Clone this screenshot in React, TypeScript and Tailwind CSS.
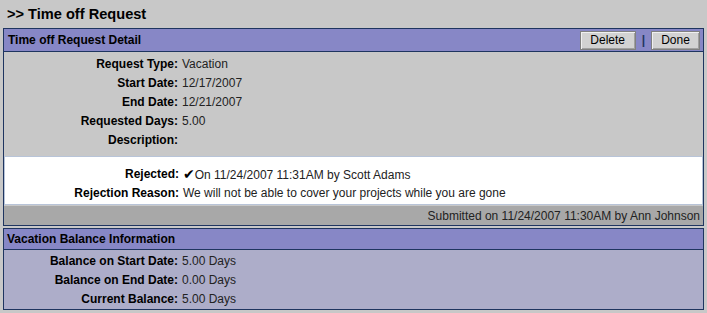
import type { ReactNode } from "react";

type Row = { label: string; value: ReactNode };

const detailRows: Row[] = [
  { label: "Request Type:", value: "Vacation" },
  { label: "Start Date:", value: "12/17/2007" },
  { label: "End Date:", value: "12/21/2007" },
  { label: "Requested Days:", value: "5.00" },
  { label: "Description:", value: "" },
];

const rejectionRows: Row[] = [
  {
    label: "Rejected:",
    value: (
      <>
        <span className="font-['DejaVu_Sans',sans-serif] text-[14px] leading-[19px] text-black">✔</span>
        On 11/24/2007 11:31AM by Scott Adams
      </>
    ),
  },
  {
    label: "Rejection Reason:",
    value: "We will not be able to cover your projects while you are gone",
  },
];

const balanceRows: Row[] = [
  { label: "Balance on Start Date:", value: "5.00 Days" },
  { label: "Balance on End Date:", value: "0.00 Days" },
  { label: "Current Balance:", value: "5.00 Days" },
];

function FieldRow({ label, value }: Row) {
  return (
    <div className="flex h-[19px] items-center leading-[19px]">
      <div className="w-[174px] shrink-0 text-right font-bold text-black">{label}</div>
      <div className="pl-[4px] text-[#222]">{value}</div>
    </div>
  );
}

function Button({ children, width }: { children: ReactNode; width: string }) {
  return (
    <button
      className={`${width} h-[19px] border border-[#808080] bg-[#d2d2d2] text-[12px] leading-[17px] text-black shadow-[inset_1px_1px_0_#f0f0f0,inset_-1px_-1px_0_#a0a0a0]`}
    >
      {children}
    </button>
  );
}

export default function App() {
  return (
    <div className="min-h-[313px] bg-[#c8c8c8] px-[3px] font-['Liberation_Sans',Arial,sans-serif] text-[12px]">
      {/* page title */}
      <div className="flex h-[28px] items-center pl-[4px] pt-[1px] text-[14.6px] font-bold text-black">
        &gt;&gt; Time off Request
      </div>

      {/* request detail */}
      <div className="w-[701px] border border-[#1f3560]">
        <div className="flex h-[23px] items-center justify-between border-b border-[#1f3560] bg-[#8787c6] pl-[4px] pr-[3px]">
          <div className="font-bold text-black">Time off Request Detail</div>
          <div className="flex items-center">
            <Button width="w-[56px]">Delete</Button>
            <span className="mx-[6px] font-bold text-[#1f3560]">|</span>
            <Button width="w-[49px]">Done</Button>
          </div>
        </div>

        <div className="bg-[#c8c8c8] pb-[6px] pt-[3px]">
          {detailRows.map((row) => (
            <FieldRow key={row.label} {...row} />
          ))}
        </div>

        <div className="border border-[#b8c4d8] bg-white pb-[1px] pt-[8px]">
          {rejectionRows.map((row) => (
            <FieldRow key={row.label} {...row} />
          ))}
        </div>

        <div className="flex h-[20px] items-center justify-end border-t border-[#c8c8c8] bg-[#a8a8a8] pr-[3px] text-[#222]">
          Submitted on 11/24/2007 11:30AM by Ann Johnson
        </div>
      </div>

      {/* vacation balance */}
      <div className="mt-[2px] w-[701px] border border-[#1f3560]">
        <div className="flex h-[21px] items-center border-b border-[#1f3560] bg-[#8787c6] pl-[3px] font-bold text-black">
          Vacation Balance Information
        </div>
        <div className="bg-[#adadc9] pt-[2px]">
          {balanceRows.map((row) => (
            <FieldRow key={row.label} {...row} />
          ))}
        </div>
      </div>
    </div>
  );
}
